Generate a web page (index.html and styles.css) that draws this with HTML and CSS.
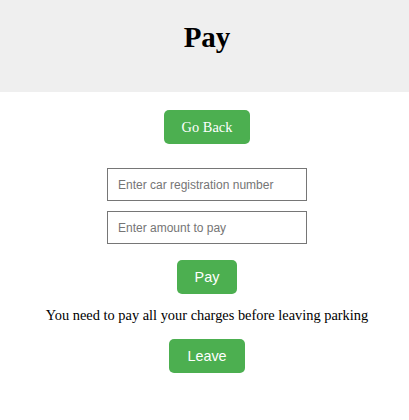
FILE: index.html
```html
<!DOCTYPE html>
<html>
<head>
<meta charset="utf-8">
<link rel="stylesheet" href="styles.css">
</head>
<body>
<header class="header">
  <h1 class="title">Pay</h1>
</header>
<main class="content">
  <button class="btn btn-back">Go Back</button>
  <form class="pay-form">
    <input class="field" type="text" placeholder="Enter car registration number">
    <input class="field field-second" type="text" placeholder="Enter amount to pay">
    <button class="btn btn-sans btn-pay" type="button">Pay</button>
  </form>
  <p class="notice">You need to pay all your charges before leaving parking</p>
  <button class="btn btn-sans btn-leave">Leave</button>
</main>
</body>
</html>
```
FILE: styles.css
```css
html, body {
  margin: 0;
  padding: 0;
  background: #ffffff;
}
body {
  font-family: "Liberation Serif", "Times New Roman", serif;
  font-size: 14.4px;
  color: #000;
}
.header {
  background: #efefef;
  height: 92px;
  box-sizing: border-box;
  padding: 21px 0 0 5px;
}
.title {
  margin: 0;
  text-align: center;
  font-size: 29px;
  line-height: 33px;
  font-weight: bold;
}
.content {
  display: flex;
  flex-direction: column;
  align-items: center;
  padding: 18px 0 0 5px;
}
.btn {
  background: #4caf50;
  color: #fff;
  border: none;
  border-radius: 5px;
  height: 34px;
  padding: 0 16px;
  font-size: 14.4px;
  font-family: "Liberation Serif", "Times New Roman", serif;
  white-space: nowrap;
  cursor: pointer;
}
.btn-sans {
  font-family: "Liberation Sans", Arial, sans-serif;
}
.btn-back {
  width: 86px;
  padding: 0;
}
.pay-form {
  display: flex;
  flex-direction: column;
  align-items: center;
  margin-top: 24px;
}
.field {
  width: 200px;
  height: 33px;
  box-sizing: border-box;
  border: 1px solid #767676;
  padding: 0 10px;
  font-family: "Liberation Sans", Arial, sans-serif;
  font-size: 12px;
  margin: 0;
}
.field::placeholder {
  color: #757575;
}
.field-second {
  margin-top: 10px;
}
.btn-pay {
  margin-top: 16px;
  width: 60px;
  padding: 0;
}
.notice {
  margin: 13px 0 0;
  line-height: 17px;
  text-align: center;
}
.btn-leave {
  margin-top: 15px;
  width: 76px;
  padding: 0;
}
```
